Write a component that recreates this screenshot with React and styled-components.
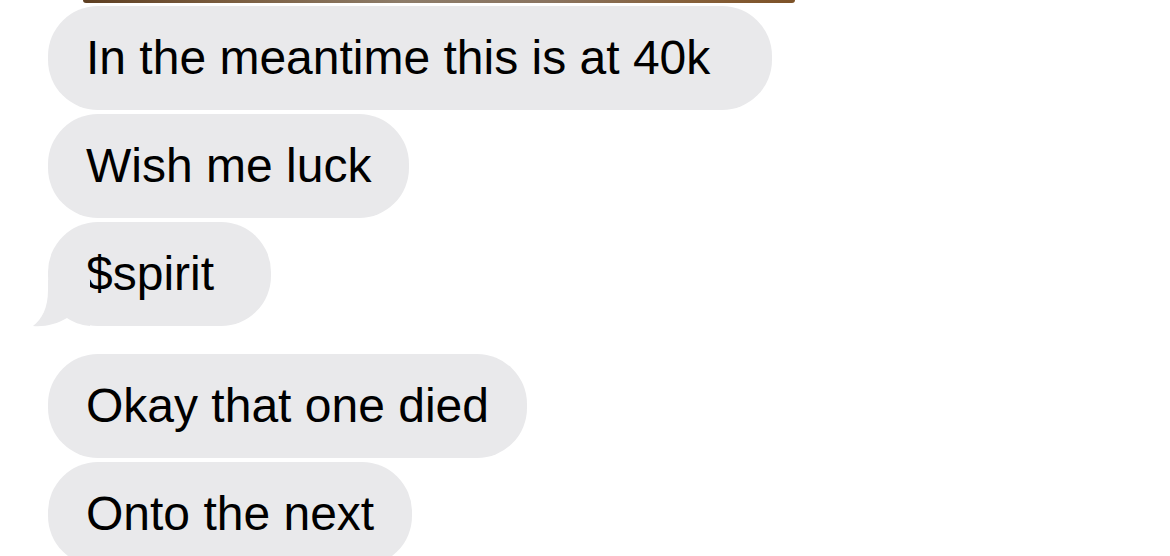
import React from "react";
import styled, { createGlobalStyle } from "styled-components";

const Global = createGlobalStyle`
  html, body {
    margin: 0;
    padding: 0;
    background: #ffffff;
  }
  body {
    font-family: "Liberation Sans", Arial, sans-serif;
    -webkit-font-smoothing: antialiased;
  }
`;

const Thread = styled.div`
  display: flex;
  flex-direction: column;
  align-items: flex-start;
  padding: 0 0 0 48px;
  width: 1170px;
  height: 556px;
  box-sizing: border-box;
  overflow: hidden;
  & > * {
    flex-shrink: 0;
  }
`;

/* bottom sliver of a shared photo scrolled above the view */
const PhotoEdge = styled.div`
  width: 712px;
  height: 3px;
  margin-left: 35px;
  border-radius: 0 0 6px 6px;
  background: linear-gradient(
    90deg,
    #5e3f22 0%,
    #7a5c3e 20%,
    #8d7c69 45%,
    #8a7460 65%,
    #86603a 85%,
    #7d5228 100%
  );
`;

const Group = styled.div`
  display: flex;
  flex-direction: column;
  align-items: flex-start;
  gap: 4px;
  margin-top: ${(p) => p.$offset}px;
`;

const Bubble = styled.div`
  position: relative;
  box-sizing: border-box;
  flex-shrink: 0;
  height: 104px;
  padding: 23px ${(p) => p.$trail ?? 38}px 23px 38px;
  border-radius: 50px;
  background: #e9e9eb;
  color: #000000;
  font-size: 48px;
  line-height: 58px;
  white-space: nowrap;
`;

const Tail = styled.svg`
  position: absolute;
  left: -16px;
  top: 58px;
  width: 60px;
  height: 47px;
  overflow: visible;
`;

function Message({ text, tail, trail }) {
  return (
    <Bubble $trail={trail}>
      {text}
      {tail && (
        <Tail viewBox="0 0 60 47" aria-hidden="true">
          <path
            d="M16 0 L16 10 C16 28 10 39 1 46 C13 47 25 44 35 38 C41 42 48 45 58 46 L58 0 Z"
            fill="#e9e9eb"
          />
        </Tail>
      )}
    </Bubble>
  );
}

export default function App() {
  return (
    <>
      <Global />
      <Thread>
        <PhotoEdge />
        <Group $offset={3}>
          <Message text="In the meantime this is at 40k" trail={62} />
          <Message text="Wish me luck" />
          <Message text="$spirit" trail={57} tail />
        </Group>
        <Group $offset={28}>
          <Message text="Okay that one died" />
          <Message text="Onto the next" />
        </Group>
      </Thread>
    </>
  );
}
